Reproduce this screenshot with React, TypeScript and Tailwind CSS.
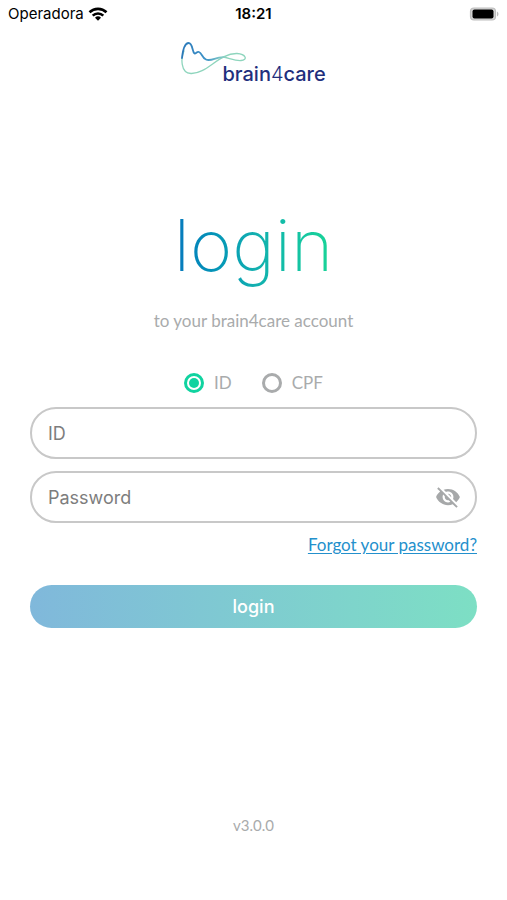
import { useState } from "react";

function StatusBar() {
  return (
    <header className="grid h-7 grid-cols-3 items-center px-2 font-['Inter',sans-serif] text-[15px] text-black">
      <div className="flex items-center gap-1">
        <span>Operadora</span>
        <svg className="h-4 w-5" viewBox="0 0 20 16" fill="none" stroke="#000" strokeWidth="2.6" aria-hidden="true">
          <path d="M1.5 6.3a12.2 12.2 0 0 1 17 0" />
          <path d="M4.7 9.6a7.6 7.6 0 0 1 10.6 0" />
          <path d="M10 14.8l-3-3.1a4.3 4.3 0 0 1 6 0z" fill="#000" stroke="none" />
        </svg>
      </div>
      <span className="text-center font-semibold">18:21</span>
      <svg className="h-4 w-[30px] justify-self-end" viewBox="0 0 30 16" aria-hidden="true">
        <rect x="1.5" y="2" width="25" height="12" rx="3.500" fill="#d4d4d4" stroke="#bdbdbd" strokeWidth="1.2" />
        <rect x="3.5" y="3.5" width="21" height="9" rx="2" fill="#000" />
        <path d="M28 5.5c2 1 2 4 0 5z" fill="#bdbdbd" />
      </svg>
    </header>
  );
}

function Logo() {
  return (
    <div className="mx-auto mt-3 flex w-[148px] items-end">
      <svg className="-mr-[23px] mb-[6px] h-10 w-[66px] shrink-0" viewBox="0 0 66 40" fill="none" strokeLinecap="round" aria-hidden="true">
        <defs>
          <linearGradient id="wave" x1="0" y1="0" x2="1" y2="0">
            <stop offset="0" stopColor="#2b78b9" />
            <stop offset="0.55" stopColor="#3d93c8" />
            <stop offset="1" stopColor="#8fd3c4" />
          </linearGradient>
        </defs>
        <path
          d="M4 11C1 17 0 33 11 33.500C27 34 39 13 57 13.500C66 14 68 20 61 20.500C55 21 49 18 43 17"
          stroke="#8ed5bd"
          strokeWidth="1.300"
        />
        <path
          d="M2 18C3 9 5 3 8.500 3C13 3 12 12 14.500 13.500C16 14 17 11 19 12C22 13 22 18 26 19.500C32 22 36 16 45 17.200"
          stroke="url(#wave)"
          strokeWidth="1.800"
        />
      </svg>
      <span className="font-['Inter',sans-serif] text-xl leading-6 font-medium text-[#1f2f7d]">
        brain<span className="font-light">4</span>care
      </span>
    </div>
  );
}

function EyeOff() {
  return (
    <svg className="h-[26px] w-[26px]" viewBox="0 0 24 24" fill="#a6a8a9" aria-hidden="true">
      <path d="M12 7c2.760 0 5 2.240 5 5 0 .650-.130 1.260-.360 1.830l2.920 2.920c1.510-1.260 2.700-2.890 3.430-4.750-1.730-4.390-6-7.500-11-7.500-1.400 0-2.740.250-3.980.700l2.160 2.160C10.740 7.130 11.350 7 12 7zM2 4.270l2.280 2.280.460.460C3.080 8.300 1.780 10.020 1 12c1.730 4.390 6 7.500 11 7.500 1.550 0 3.030-.300 4.380-.840l.420.420L19.730 22 21 20.730 3.270 3 2 4.270zM7.530 9.800l1.550 1.550c-.050.210-.080.430-.080.650 0 1.660 1.340 3 3 3 .220 0 .440-.030.650-.080l1.550 1.550c-.670.330-1.410.530-2.200.530-2.760 0-5-2.240-5-5 0-.790.200-1.530.530-2.200zm4.310-.780l3.150 3.150.020-.160c0-1.660-1.340-3-3-3l-.170.010z" />
    </svg>
  );
}

const radioClass =
  "m-0 h-5 w-5 appearance-none rounded-full border-3 border-[#a9abac] bg-white checked:border-[#10d3a0] checked:bg-[#10d3a0] checked:bg-clip-content checked:p-[2px]";
const fieldClass =
  "h-[52px] w-full rounded-full border-2 border-[#c8c8c8] bg-white pl-4 font-['Inter',sans-serif] text-lg text-[#555] outline-none placeholder:text-[#7d7d7d]";

export default function App() {
  const [kind, setKind] = useState("ID");
  const [visible, setVisible] = useState(false);

  return (
    <div className="flex min-h-screen flex-col bg-white font-['Lato',sans-serif] text-[#a9abac]">
      <StatusBar />
      <Logo />
      <main className="flex flex-col px-[30px] pt-[111px]">
        <h1 className="mx-auto bg-linear-to-r from-[#0878bd] via-[#12aeb0] to-[#1ad596] bg-clip-text font-['Inter',sans-serif] text-[72px] leading-[96px] font-extralight text-transparent">
          login
        </h1>
        <p className="mt-4 text-center text-[17px] leading-6">to your brain4care account</p>

        <form className="flex flex-col" onSubmit={(e) => e.preventDefault()}>
          <div className="mt-[38px] flex justify-center gap-[30px] text-[17px] leading-6" role="radiogroup" aria-label="Login type">
            {["ID", "CPF"].map((option) => (
              <label key={option} className="flex items-center gap-[10px]">
                <input
                  type="radio"
                  name="kind"
                  value={option}
                  checked={kind === option}
                  onChange={() => setKind(option)}
                  className={radioClass}
                />
                {option}
              </label>
            ))}
          </div>
          <input className={fieldClass + " mt-3 pr-4"} type="text" aria-label={kind} placeholder={kind} />
          <div className="relative mt-3">
            <input
              className={fieldClass + " pr-14"}
              type={visible ? "text" : "password"}
              aria-label="Password"
              placeholder="Password"
            />
            <button
              type="button"
              aria-label="Show password"
              onClick={() => setVisible(!visible)}
              className="absolute inset-y-0 right-4 flex items-center"
            >
              <EyeOff />
            </button>
          </div>
          <a href="#forgot" className="mt-[10px] self-end text-[17px] leading-6 text-[#2490cc] underline underline-offset-2">
            Forgot your password?
          </a>
          <button
            type="submit"
            className="mt-7 h-[43px] rounded-full bg-linear-to-r from-[#80b8db] to-[#7ddfc4] font-['Inter',sans-serif] text-lg leading-6 font-medium text-white"
          >
            login
          </button>
        </form>
      </main>
      <footer className="mt-auto pb-[63px] text-center text-[15px] leading-6">v3.0.0</footer>
    </div>
  );
}
